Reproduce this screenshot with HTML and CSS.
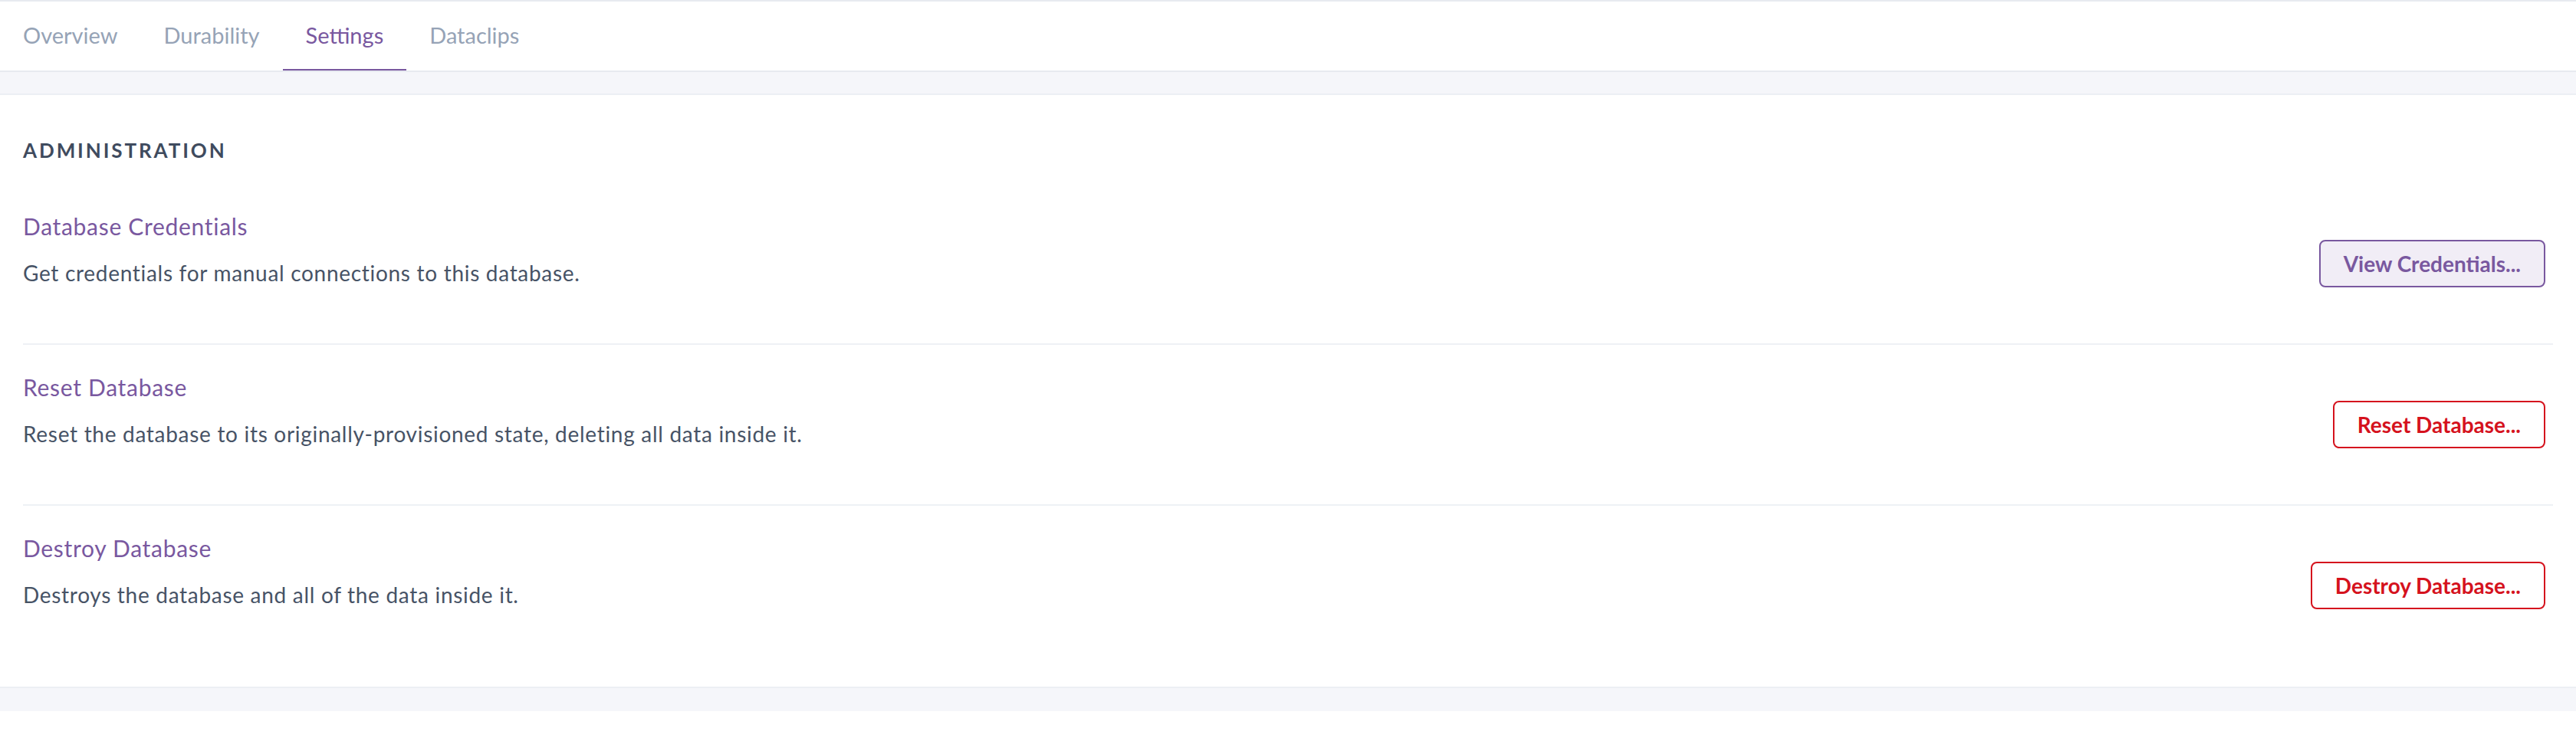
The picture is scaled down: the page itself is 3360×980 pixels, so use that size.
FILE: index.html
```html
<!DOCTYPE html>
<html lang="en">
<head>
<meta charset="utf-8">
<title>Settings</title>
<link rel="stylesheet" href="styles.css">
</head>
<body>
<div class="topline"></div>
<nav class="tabs">
  <a class="tab">Overview</a>
  <a class="tab">Durability</a>
  <a class="tab active">Settings</a>
  <a class="tab">Dataclips</a>
</nav>
<main class="band">
  <section class="card">
    <h2 class="heading">ADMINISTRATION</h2>
    <div class="row">
      <div class="row-text">
        <div class="title">Database Credentials</div>
        <div class="desc">Get credentials for manual connections to this database.</div>
      </div>
      <button class="btn btn-purple">View Credentials...</button>
    </div>
    <div class="row">
      <div class="row-text">
        <div class="title">Reset Database</div>
        <div class="desc">Reset the database to its originally-provisioned state, deleting all data inside it.</div>
      </div>
      <button class="btn btn-red">Reset Database...</button>
    </div>
    <div class="row last">
      <div class="row-text">
        <div class="title">Destroy Database</div>
        <div class="desc">Destroys the database and all of the data inside it.</div>
      </div>
      <button class="btn btn-red">Destroy Database...</button>
    </div>
  </section>
</main>
</body>
</html>
```
FILE: styles.css
```css
html, body {
  margin: 0;
  padding: 0;
  background: #ffffff;
  font-family: Lato, "Open Sans", "Liberation Sans", sans-serif;
}

.topline {
  height: 2px;
  background: #e7eaf0;
}

.tabs {
  display: flex;
  height: 90px;
  border-bottom: 2px solid #e7eaf0;
}

.tab {
  display: block;
  box-sizing: border-box;
  height: 90px;
  padding: 0 30px;
  line-height: 88px;
  font-size: 29px;
  color: #96a3b6;
  border-bottom: 2px solid transparent;
}

.tab.active {
  color: #79589f;
  border-bottom-color: #79589f;
}

.band {
  background: #f5f6fa;
  padding: 28px 0 30px;
}

.card {
  background: #ffffff;
  border-top: 2px solid #eceff4;
  border-bottom: 2px solid #eceff4;
  padding: 56px 30px 28px;
}

.heading {
  margin: 0 0 28px;
  font-size: 26px;
  line-height: 32px;
  font-weight: 700;
  letter-spacing: 2.9px;
  color: #3f4b5e;
}

.row {
  display: flex;
  align-items: center;
  justify-content: space-between;
  height: 208px;
  border-bottom: 2px solid #eef1f5;
}

.row.last {
  border-bottom: none;
}

.row-text {
  align-self: flex-start;
  padding-top: 37px;
}

.title {
  font-size: 30px;
  line-height: 36px;
  letter-spacing: 0.7px;
  color: #79589f;
}

.desc {
  margin-top: 23px;
  font-size: 28px;
  line-height: 40px;
  letter-spacing: 0.7px;
  color: #475366;
}

.btn {
  box-sizing: border-box;
  height: 62px;
  margin-right: 10px;
  padding: 0 30px;
  border-radius: 8px;
  border: 2px solid;
  font-family: inherit;
  font-size: 28px;
  font-weight: 700;
  background: #ffffff;
  cursor: pointer;
}

.btn-purple {
  color: #79589f;
  border-color: #79589f;
  background: #f1edf6;
}

.btn-red {
  color: #d5121d;
  border-color: #d5121d;
}
```
